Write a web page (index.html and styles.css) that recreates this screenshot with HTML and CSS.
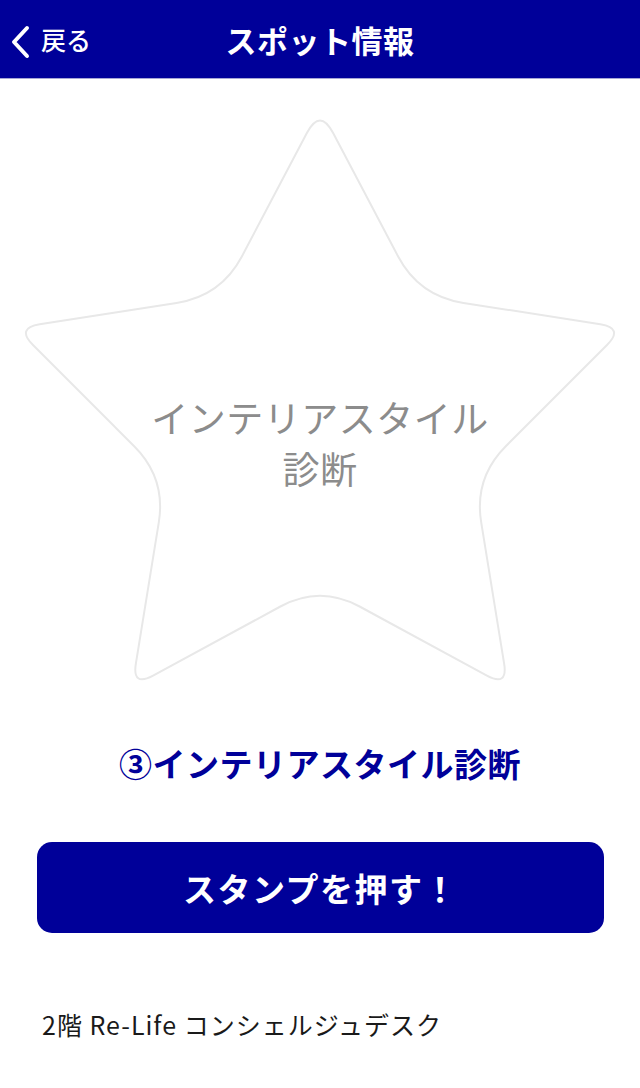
FILE: index.html
```html
<!DOCTYPE html>
<html lang="ja">

<head>
    <meta charset="UTF-8">
    <meta name="viewport" content="width=device-width, initial-scale=1.0">
    <title>スポット情報</title>
    <link rel="stylesheet" href="styles.css">
</head>

<body>

<!-- ヘッダー -->
<div class="header">
    <a class="back-link" href="#">
        <svg class="back-icon" width="22" height="34" viewBox="0 0 22 34">
            <path d="M18 3 L5 17 L18 31" fill="none" stroke="#fff" stroke-width="4" stroke-linecap="round" stroke-linejoin="round"/>
        </svg>
        <span>戻る</span>
    </a>
    <h1 class="header-title">スポット情報</h1>
</div>

<!-- スタンプ枠 -->
<div class="stamp-area">
    <svg class="stamp-star" width="640" height="621" viewBox="0 79 640 621">
        <path d="M307,132.8 Q320,108 333,132.8 L398,256.2 Q419,296 463.5,302.9 L600.3,324.3 Q624,328 607,345 L505.8,446.2 Q474,478 481.2,522.4 L504.1,663.3 Q508,687 486.9,675.6 L359.6,606.5 Q320,585 280.4,606.5 L153.1,675.6 Q132,687 135.9,663.3 L158.8,522.4 Q166,478 134.2,446.2 L33,345 Q16,328 39.7,324.3 L176.5,302.9 Q221,296 242,256.2 Z"
              fill="none" stroke="#e8e8e8" stroke-width="2"/>
    </svg>
    <div class="stamp-label">インテリアスタイル<br>診断</div>
</div>

<h2 class="spot-name">③インテリアスタイル診断</h2>

<button class="stamp-button">スタンプを押す！</button>

<p class="spot-place">2階 Re-Life コンシェルジュデスク</p>

</body>
</html>
```

FILE: styles.css
```css
body {
    margin: 0;
    background-color: #fff;
    font-family: "Noto Sans CJK JP", "Noto Sans", sans-serif;
    color: #222;
}
.header {
    position: relative;
    height: 78px;
    background-color: #000099;
    border-bottom: 1px solid #a6a6d6;
    display: flex;
    align-items: center;
    justify-content: center;
}
.back-link {
    position: absolute;
    left: 9px;
    top: 0;
    height: 78px;
    display: flex;
    align-items: center;
    gap: 10px;
    color: white;
    text-decoration: none;
    font-size: 25px;
    font-weight: 500;
}
.back-icon {
    margin-top: 6px;
}
.header-title {
    margin: 0;
    color: white;
    font-size: 31px;
    font-weight: bold;
    letter-spacing: 0.5px;
}
.stamp-area {
    display: grid;
    height: 621px;
}
.stamp-star,
.stamp-label {
    grid-area: 1 / 1;
}
.stamp-star {
    display: block;
}
.stamp-label {
    padding-top: 313px;
    text-align: center;
    font-size: 37px;
    line-height: 51px;
    letter-spacing: 0.5px;
    color: #8c8c8c;
}
.spot-name {
    margin: 43px 0 0;
    text-align: center;
    font-size: 33px;
    line-height: 40px;
    font-weight: bold;
    letter-spacing: 0.5px;
    color: #000099;
}
.stamp-button {
    display: block;
    width: 567px;
    height: 91px;
    margin: 59px 0 0 37px;
    border: none;
    border-radius: 15px;
    background-color: #000099;
    color: white;
    font-family: inherit;
    font-size: 33px;
    font-weight: bold;
    letter-spacing: 1.5px;
    cursor: pointer;
}
.spot-place {
    margin: 76px 0 0 42px;
    font-size: 25px;
    line-height: 30px;
    letter-spacing: 1px;
    color: #1a1a1a;
}
```
